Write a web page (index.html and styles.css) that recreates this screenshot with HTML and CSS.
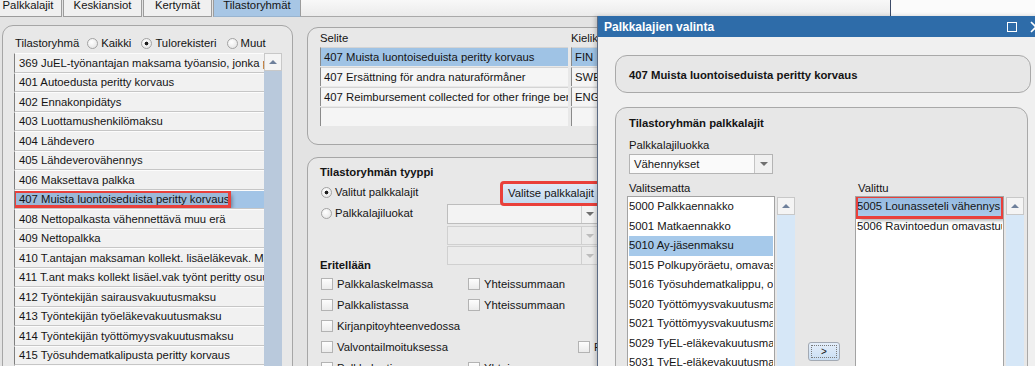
FILE: index.html
```html
<!DOCTYPE html>
<html lang="fi">
<head>
    <meta charset="UTF-8">
    <meta name="viewport" content="width=device-width, initial-scale=1.0">
    <title>Tilastoryhmät</title>
    <link rel="stylesheet" href="styles.css">
</head>
<body>
    <div class="tabbar">
        <div class="tab tab-a">Palkkalajit</div>
        <div class="tab tab-b">Keskiansiot</div>
        <div class="tab tab-c">Kertymät</div>
        <div class="tab tab-d active">Tilastoryhmät</div>
        <div class="tabfill"></div>
        <div class="backwin"></div>
    </div>

    <div class="main">
        <!-- statistics groups -->
        <div class="panel groups">
            <div class="filter">
                <span class="filter-label">Tilastoryhmä</span>
                <span class="opt"><span class="radio"></span>Kaikki</span>
                <span class="opt"><span class="radio on"></span>Tulorekisteri</span>
                <span class="opt"><span class="radio"></span>Muut</span>
            </div>
            <div class="listbox">
                <div class="rows">
                    <div class="row">369 JuEL-työnantajan maksama työansio, jonka perusteella</div>
                    <div class="row">401 Autoedusta peritty korvaus</div>
                    <div class="row">402 Ennakonpidätys</div>
                    <div class="row">403 Luottamushenkilömaksu</div>
                    <div class="row">404 Lähdevero</div>
                    <div class="row">405 Lähdeverovähennys</div>
                    <div class="row">406 Maksettava palkka</div>
                    <div class="row selected"><span class="mark rowmark">407 Muista luontoiseduista peritty korvaus</span></div>
                    <div class="row">408 Nettopalkasta vähennettävä muu erä</div>
                    <div class="row">409 Nettopalkka</div>
                    <div class="row">410 T.antajan maksaman kollekt. lisäeläkevak. Maksu</div>
                    <div class="row">411 T.ant maks kollekt lisäel.vak työnt peritty osuus</div>
                    <div class="row">412 Työntekijän sairausvakuutusmaksu</div>
                    <div class="row">413 Työntekijän työeläkevakuutusmaksu</div>
                    <div class="row">414 Työntekijän työttömyysvakuutusmaksu</div>
                    <div class="row">415 Työsuhdematkalipusta peritty korvaus</div>
                    <div class="row"></div>
                </div>
                <div class="vscroll">
                    <div class="sbtn"><span class="up"></span></div>
                </div>
            </div>
        </div>

        <div class="middle">
            <div class="panel selite">
                <div class="stable">
                    <div class="shead">Selite</div>
                    <div class="shead">Kielikoodi</div>
                    <div class="cell sel">407 Muista luontoiseduista peritty korvaus</div>
                    <div class="cell sel">FIN</div>
                    <div class="cell">407 Ersättning för andra naturaförmåner</div>
                    <div class="cell">SWE</div>
                    <div class="cell">407 Reimbursement collected for other fringe benefits</div>
                    <div class="cell">ENG</div>
                    <div class="cell"></div>
                    <div class="cell"></div>
                </div>
            </div>

            <div class="panel tyyppi">
                <div class="ptitle">Tilastoryhmän tyyppi</div>
                <div class="typetop">
                    <div class="typeleft">
                        <div class="opt line"><span class="radio on"></span>Valitut palkkalajit</div>
                        <div class="opt line"><span class="radio"></span>Palkkalajiluokat</div>
                        <div class="ptitle erit">Eritellään</div>
                    </div>
                    <div class="typeright">
                        <div class="btn mark">Valitse palkkalajit</div>
                        <div class="combo"><span class="arrow"></span></div>
                        <div class="combo off"><span class="arrow"></span></div>
                        <div class="combo off"><span class="arrow"></span></div>
                    </div>
                </div>
                <div class="checks">
                    <div class="chk-row">
                        <div class="chk"><span class="box"></span>Palkkalaskelmassa</div>
                        <div class="chk c2"><span class="box"></span>Yhteissummaan</div>
                    </div>
                    <div class="chk-row">
                        <div class="chk"><span class="box"></span>Palkkalistassa</div>
                        <div class="chk c2"><span class="box"></span>Yhteissummaan</div>
                    </div>
                    <div class="chk-row">
                        <div class="chk"><span class="box"></span>Kirjanpitoyhteenvedossa</div>
                    </div>
                    <div class="chk-row">
                        <div class="chk"><span class="box"></span>Valvontailmoituksessa</div>
                        <div class="chk c2"></div>
                        <div class="chk"><span class="box"></span>Palkkatodistuksessa</div>
                    </div>
                    <div class="chk-row">
                        <div class="chk"><span class="box"></span>Palkkakortissa</div>
                        <div class="chk c2"><span class="box"></span>Yhteissummaan</div>
                    </div>
                </div>
            </div>
        </div>
    </div>

    <!-- modal window -->
    <div class="dialog">
        <div class="dlg-title">
            <span>Palkkalajien valinta</span>
            <span class="maxbtn"></span>
            <svg class="closebtn" width="12" height="12" viewBox="0 0 12 12">
                <path d="M1 1 L11 11 M11 1 L1 11" stroke="#fff" stroke-width="1.6" fill="none"/>
            </svg>
        </div>
        <div class="dlg-body">
            <div class="box-r headbox">407 Muista luontoiseduista peritty korvaus</div>
            <div class="box-r members">
                <div class="ptitle">Tilastoryhmän palkkalajit</div>
                <div class="fieldlbl">Palkkalajiluokka</div>
                <div class="combo dlgcombo"><span class="val">Vähennykset</span><span class="arrow"></span></div>
                <div class="pick">
                    <div class="pickcol">
                        <div class="picklbl">Valitsematta</div>
                        <div class="picklist">
                            <div class="items">
                                <div class="item">5000 Palkkaennakko</div>
                                <div class="item">5001 Matkaennakko</div>
                                <div class="item cur">5010 Ay-jäsenmaksu</div>
                                <div class="item">5015 Polkupyöräetu, omavastuu</div>
                                <div class="item">5016 Työsuhdematkalippu, omavastuu</div>
                                <div class="item">5020 Työttömyysvakuutusmaksu</div>
                                <div class="item">5021 Työttömyysvakuutusmaksu, osa-aikainen</div>
                                <div class="item">5029 TyEL-eläkevakuutusmaksu</div>
                                <div class="item">5031 TyEL-eläkevakuutusmaksu, 53 v</div>
                            </div>
                            <div class="vscroll light">
                                <div class="sbtn"><span class="up"></span></div>
                            </div>
                        </div>
                    </div>
                    <div class="pickmid">
                        <div class="movebtn">&gt;</div>
                    </div>
                    <div class="pickcol right">
                        <div class="picklbl">Valittu</div>
                        <div class="picklist">
                            <div class="items wide">
                                <div class="item cur mark">5005 Lounasseteli vähennys</div>
                                <div class="item">5006 Ravintoedun omavastuu</div>
                            </div>
                            <div class="vscroll light">
                                <div class="sbtn"><span class="up"></span></div>
                            </div>
                        </div>
                    </div>
                </div>
            </div>
        </div>
    </div>
</body>
</html>
```

FILE: styles.css
```css
* {
    box-sizing: border-box;
}
html, body {
    overflow: hidden;
}
body {
    margin: 0;
    height: 366px;
    position: relative;
    background: #e3e3e3;
    color: #141414;
    font-family: "Liberation Sans", Arial, sans-serif;
    font-size: 11.3px;
}

/* tabs */
.tabbar {
    display: flex;
    height: 17px;
}
.tab {
    height: 17px;
    margin-right: 1px;
    line-height: 10px;
    text-align: center;
    white-space: nowrap;
    background: #f0f0f0;
    border: 1px solid #9c9c9c;
    border-top: 0;
}
.tab-a { margin-left: -6px; width: 68px; }
.tab-b { width: 79px; }
.tab-c { width: 69px; }
.tab-d { width: 88px; margin-right: 0; }
.tab.active {
    background: #a7c6e5;
    border-bottom-color: #98b4d0;
}
.tabfill {
    flex: 1;
    background: linear-gradient(#f8f8f8, #ebebeb);
    border-bottom: 1px solid #a9a9a9;
}
.backwin {
    width: 145px;
    background: #fbfbfb;
    border-left: 1px solid #3d4b68;
}

/* layout */
.main {
    display: flex;
    align-items: flex-start;
    padding: 8px 0 0 2px;
}
.panel {
    background: #e8e8e8;
    border: 1px solid #a6a6a6;
    border-radius: 11px;
}
.groups {
    flex: none;
    width: 291px;
    height: 360px;
    padding: 9px 0 0 11px;
}
.middle {
    flex: none;
    width: 420px;
    margin: 2px 0 0 14px;
}

/* radios and checkboxes */
.opt {
    display: flex;
    align-items: center;
    gap: 3px;
    white-space: nowrap;
}
.radio {
    flex: none;
    width: 11px;
    height: 11px;
    border-radius: 50%;
    border: 1px solid #a3a3a3;
    background: radial-gradient(circle at 40% 35%, #ffffff, #e0e0e0);
}
.radio.on {
    background: radial-gradient(circle, #1e1e1e 0 1.6px, transparent 2.2px),
                radial-gradient(circle at 40% 35%, #ffffff, #e0e0e0);
}
.box {
    flex: none;
    width: 12px;
    height: 12px;
    border: 1px solid #b3b3b3;
    background: linear-gradient(#fdfdfd, #ebebeb);
}

/* group list */
.filter {
    display: flex;
    align-items: center;
    height: 16px;
    padding-left: 1px;
}
.filter-label {
    margin-right: 8px;
}
.filter .opt + .opt {
    margin-left: 10px;
}
.listbox {
    display: flex;
    margin-top: 2px;
}
.rows {
    width: 250px;
}
.row {
    display: flex;
    align-items: center;
    height: 19.5px;
    padding-left: 4px;
    white-space: nowrap;
    overflow: hidden;
    background: #f1f1f1;
    border-left: 1px solid #7f7f7f;
    border-top: 1px solid #fcfcfc;
    border-bottom: 1px solid #c6c6c6;
}
.row.selected {
    padding-left: 0;
    background: #a2c4e6;
}
.rowmark {
    line-height: 14px;
    padding: 0 0 0 4px;
    background: #9bb9d8;
}
.vscroll {
    width: 18px;
    height: 320px;
    background: #b9c9dc;
}
.vscroll.light {
    background: #d6e7f7;
    margin-top: 1px;
}
.sbtn {
    display: flex;
    align-items: center;
    justify-content: center;
    height: 18px;
    background: #f4f4f4;
    border: 1px solid #c8c8c8;
}
.up {
    width: 0;
    height: 0;
    border-left: 4px solid transparent;
    border-right: 4px solid transparent;
    border-bottom: 4px solid #6e809b;
}

/* annotation frames */
.mark {
    outline: 3px solid #e9403b;
    outline-offset: -1px;
    box-shadow: 3px 3px 4px rgba(0, 0, 0, 0.4);
}

/* selite */
.selite {
    height: 118px;
    padding: 3px 0 0 12px;
}
.stable {
    display: grid;
    grid-template-columns: 248px 60px;
    grid-template-rows: 15px repeat(4, 19px);
    column-gap: 3px;
    row-gap: 1px;
}
.shead {
    line-height: 14px;
}
.cell {
    padding-left: 3px;
    line-height: 18px;
    white-space: nowrap;
    overflow: hidden;
    background: #f5f5f5;
    border-left: 1px solid #8a8a8a;
    border-top: 1px solid #d4d4d4;
}
.cell.sel {
    background: #9fc3e5;
}

/* tyyppi */
.tyyppi {
    height: 260px;
    margin-top: 12px;
    padding: 7px 0 0 12px;
}
.ptitle {
    font-weight: bold;
    line-height: 14px;
}
.typetop {
    display: flex;
    margin-top: 3px;
}
.typeleft {
    width: 127px;
}
.opt.line {
    height: 20px;
    margin: 0 0 1px 1px;
}
.erit {
    margin-top: 35px;
}
.btn {
    width: 100px;
    height: 21px;
    margin: 1px 0 0 55px;
    padding-left: 5px;
    line-height: 19px;
    white-space: nowrap;
    background: linear-gradient(#dfeaf6, #c4d9ee);
    border: 1px solid #a2b3c6;
    border-radius: 2px;
}
.combo {
    display: flex;
    justify-content: flex-end;
    width: 151px;
    height: 20px;
    background: #f3f3f3;
    border: 1px solid #bdbdbd;
}
.combo.off {
    height: 19px;
    margin-top: 1px;
    background: #ebebeb;
    border-color: #d0d0d0;
}
.typeright .combo:nth-child(3) {
    margin-top: 2px;
}
.arrow {
    display: flex;
    align-items: center;
    justify-content: center;
    width: 16px;
    border-left: 1px solid #cfcfcf;
}
.arrow::before {
    content: "";
    border-left: 4px solid transparent;
    border-right: 4px solid transparent;
    border-top: 4px solid #6f6f6f;
}
.combo.off .arrow::before {
    border-top-color: #bcbcbc;
}
.checks {
    margin-top: 1px;
}
.chk-row {
    display: flex;
    align-items: center;
    height: 21px;
}
.chk {
    display: flex;
    align-items: center;
    gap: 4px;
    width: 147px;
    margin-left: 1px;
    white-space: nowrap;
}
.chk.c2 {
    width: 109px;
    margin-left: 0;
}

/* dialog */
.dialog {
    position: absolute;
    left: 597px;
    top: 16px;
    width: 450px;
    height: 360px;
    background: #f0f0f0;
    border-left: 1px solid #5b6b84;
    box-shadow: -2px 0 4px rgba(0, 0, 0, 0.18);
}
.dlg-title {
    display: flex;
    align-items: center;
    height: 21px;
    padding-left: 6px;
    background: #2e6ca9;
    color: #ffffff;
    font-size: 12px;
    font-weight: bold;
}
.maxbtn {
    width: 10px;
    height: 10px;
    margin-left: auto;
    border: 1.5px solid #ffffff;
}
.closebtn {
    margin: 0 5px 0 13px;
}
.dlg-body {
    padding: 18px 0 0 17px;
}
.box-r {
    background: #e7e7e7;
    border: 1px solid #a9a9a9;
    border-radius: 12px;
}
.headbox {
    width: 416px;
    height: 38px;
    padding: 2px 0 0 13px;
    line-height: 34px;
    font-weight: bold;
}
.members {
    width: 413px;
    height: 290px;
    margin-top: 14px;
    padding: 8px 0 0 13px;
}
.fieldlbl {
    margin-top: 8px;
    line-height: 14px;
}
.dlgcombo {
    width: 144px;
    margin-top: 2px;
    justify-content: space-between;
    background: #fafafa;
    border-color: #b4b4b4;
}
.dlgcombo .val {
    padding-left: 4px;
    line-height: 18px;
}
.dlgcombo .arrow {
    width: 18px;
    background: #f0f0f0;
    border-left-color: #c4c4c4;
}
.pick {
    display: flex;
    margin: 7px 0 0 -2px;
}
.pickcol {
    width: 168px;
}
.pickcol.right {
    width: 169px;
    margin-left: 15px;
}
.picklbl {
    padding-left: 2px;
    line-height: 14px;
}
.pickcol.right .picklbl {
    padding-left: 3px;
}
.picklist {
    display: flex;
    gap: 2px;
    margin-top: 1px;
}
.items {
    width: 148px;
    height: 180px;
    background: #ffffff;
    border: 1px solid #a3a3a3;
    overflow: hidden;
}
.items.wide {
    width: 149px;
}
.item {
    height: 19.5px;
    line-height: 19.5px;
    margin: 0 1px;
    white-space: nowrap;
    overflow: hidden;
}
.item.cur {
    background: #a6c9ea;
}
.items.wide .item.cur {
    background: linear-gradient(#94b9df, #abcaea);
}
.pickmid {
    width: 32px;
    margin-left: 13px;
    padding-top: 161px;
}
.movebtn {
    height: 19px;
    line-height: 17px;
    text-align: center;
    font-size: 10px;
    background: linear-gradient(#e4eefa, #c9def3);
    border: 1px solid #a2a9b3;
    border-radius: 3px;
    outline: 1px dotted #7a7a7a;
    outline-offset: -4px;
}
```
